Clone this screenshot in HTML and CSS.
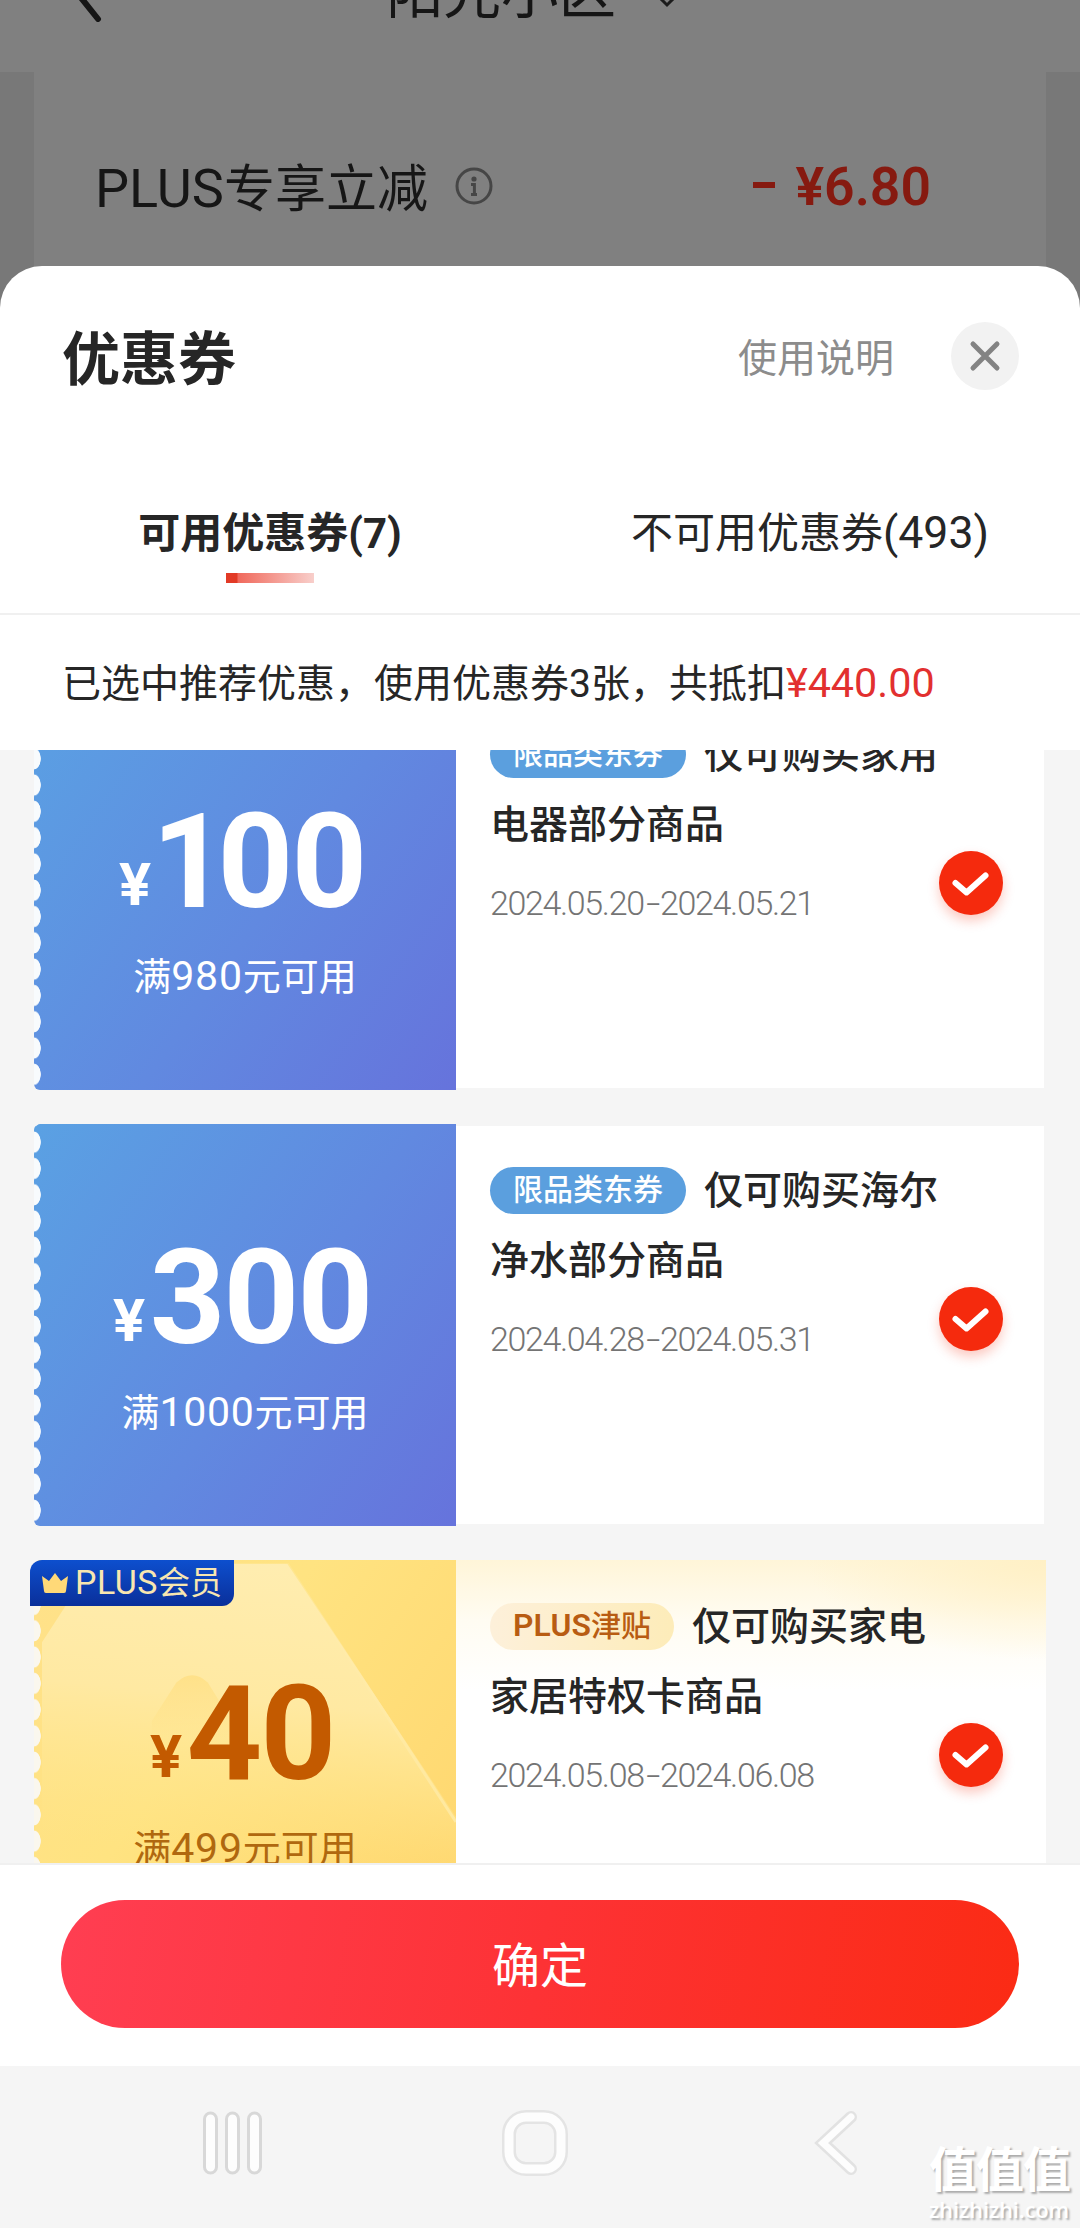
FILE: index.html
```html
<!DOCTYPE html>
<html lang="zh-CN">
<head>
<meta charset="utf-8">
<title>优惠券</title>
<link rel="stylesheet" href="styles.css">
</head>
<body>
<div class="screen">
  <header class="page-head">
    <svg class="page-back" width="30" height="54" viewBox="0 0 30 54"><path d="M27 3 5 26 25 51" fill="none" stroke="#161616" stroke-width="6" stroke-linecap="round"/></svg>
    <h1 class="page-title">阳光小区</h1>
    <svg class="page-caret" width="22" height="14" viewBox="0 0 22 14"><path d="M2 2 11 11 20 2" fill="none" stroke="#1c1c1c" stroke-width="3"/></svg>
  </header>
  <section class="page-body">
    <div class="discount">
      <span class="discount-name"><span class="num">PLUS</span>专享立减</span>
      <svg class="info" width="38" height="38" viewBox="0 0 38 38"><circle cx="19" cy="19" r="17" fill="none" stroke="#464646" stroke-width="3"/><circle cx="19" cy="12" r="2.600" fill="#464646"/><path d="M16 17.500h3.400V27M16 27.500h6" fill="none" stroke="#464646" stroke-width="3"/></svg>
      <span class="discount-minus"></span>
      <span class="discount-price">¥6.80</span>
    </div>
  </section>

  <main class="sheet">
    <div class="sheet-head">
      <h2 class="sheet-title">优惠券</h2>
      <a class="help">使用说明</a>
      <button class="close" aria-label="关闭"><svg width="32" height="32" viewBox="0 0 32 32"><path d="M4 4 28 28M28 4 4 28" stroke="#838383" stroke-width="5" stroke-linecap="round"/></svg></button>
    </div>
    <nav class="tabs">
      <a class="tab tab-active">可用优惠券(7)</a>
      <a class="tab">不可用优惠券<span class="num">(493)</span></a>
    </nav>
    <p class="notice">已选中推荐优惠，使用优惠券3张，共抵扣<span class="notice-sum num">¥440.00</span></p>

    <div class="list">
      <article class="coupon">
        <div class="stub">
          <div class="amount"><span class="yen">¥</span><span class="one">1</span>00</div>
          <div class="terms">满<span class="num">980</span>元可用</div>
        </div>
        <div class="info-pane">
          <div class="desc"><span class="tag">限品类东券</span>仅可购买家用<br>电器部分商品</div>
          <div class="dates">2024.05.20<span class="dash">-</span>2024.05.21</div>
          <span class="check"><svg width="40" height="28" viewBox="0 0 40 28"><path d="M4.500 14 15.500 23.500 34.500 6.500" fill="none" stroke="#fff" stroke-width="6" stroke-linecap="round" stroke-linejoin="round"/></svg></span>
        </div>
      </article>
      <article class="coupon">
        <div class="stub">
          <div class="amount"><span class="yen">¥</span>300</div>
          <div class="terms">满<span class="num">1000</span>元可用</div>
        </div>
        <div class="info-pane">
          <div class="desc"><span class="tag">限品类东券</span>仅可购买海尔<br>净水部分商品</div>
          <div class="dates">2024.04.28<span class="dash">-</span>2024.05.31</div>
          <span class="check"><svg width="40" height="28" viewBox="0 0 40 28"><path d="M4.500 14 15.500 23.500 34.500 6.500" fill="none" stroke="#fff" stroke-width="6" stroke-linecap="round" stroke-linejoin="round"/></svg></span>
        </div>
      </article>
      <article class="coupon coupon-plus">
        <div class="stub">
          <svg class="beam" width="422" height="402" viewBox="0 0 422 402">
            <defs>
              <linearGradient id="ray" x1="0.600" y1="0" x2="0.500" y2="1"><stop offset="0" stop-color="#ffedb0"/><stop offset="0.350" stop-color="#ffe9a2"/><stop offset="0.750" stop-color="#ffe68a" stop-opacity="0"/></linearGradient>
              <linearGradient id="edge" x1="0" y1="0" x2="0" y2="1"><stop offset="0" stop-color="#ffedb0" stop-opacity="0.300"/><stop offset="1" stop-color="#ffe9a0"/></linearGradient>
              <linearGradient id="peak" x1="0" y1="0" x2="0" y2="1"><stop offset="0" stop-color="#ffd96f"/><stop offset="0.600" stop-color="#ffd96f" stop-opacity="0"/></linearGradient>
            </defs>
            <path d="M22 46 0 80V402H422V258L250 0H50Z" fill="url(#ray)"/>
            <path d="M250 0 422 263" stroke="url(#edge)" stroke-width="3"/>
            <path d="M112 160 137 121Q153 106 169 121L230 220H110Z" fill="url(#peak)" opacity=".5"/>
          </svg>
          <div class="member"><svg width="28" height="21" viewBox="0 0 28 21"><path d="M1 3 8 8 14 0 20 8 27 3 25 18Q25 20 23 20H5Q3 20 3 18Z" fill="#ffd978"/></svg><span><span class="num">PLUS</span>会员</span></div>
          <div class="amount"><span class="yen">¥</span>40</div>
          <div class="terms">满<span class="num">499</span>元可用</div>
        </div>
        <div class="info-pane">
          <div class="desc"><span class="tag"><span class="num">PLUS</span>津贴</span>仅可购买家电<br>家居特权卡商品</div>
          <div class="dates">2024.05.08<span class="dash">-</span>2024.06.08</div>
          <span class="check"><svg width="40" height="28" viewBox="0 0 40 28"><path d="M4.500 14 15.500 23.500 34.500 6.500" fill="none" stroke="#fff" stroke-width="6" stroke-linecap="round" stroke-linejoin="round"/></svg></span>
        </div>
      </article>
    </div>

    <div class="actions"><button class="confirm">确定</button></div>
  </main>

  <footer class="sysbar">
    <svg width="62" height="68" viewBox="0 0 62 68" fill="#fdfdfd" stroke="#d8d8d8" stroke-width="3"><rect x="2.500" y="4" width="12" height="60" rx="6"/><rect x="24.500" y="4" width="12" height="60" rx="6"/><rect x="46.500" y="4" width="12" height="60" rx="6"/></svg>
    <svg width="68" height="70" viewBox="0 0 68 70" fill="none"><rect x="8" y="9" width="52" height="52" rx="17" stroke="#e4e4e4" stroke-width="14"/><rect x="8" y="9" width="52" height="52" rx="17" stroke="#fdfdfd" stroke-width="9"/></svg>
    <svg width="46" height="68" viewBox="0 0 46 68" fill="none" stroke-linecap="round"><path d="M37 8 9 34 37 60" stroke="#e2e2e2" stroke-width="12"/><path d="M37 8 9 34 37 60" stroke="#fdfdfd" stroke-width="7"/></svg>
    <div class="mark"><span class="mark-name">值值值</span><span class="mark-site">zhizhizhi.com</span></div>
  </footer>
</div>
</body>
</html>
```
FILE: styles.css
```css
* { box-sizing: border-box; }
body {
  margin: 0;
  background: #f5f5f5;
  color: #262626;
  font-family: Roboto, "Noto Sans CJK SC", sans-serif;
}
h1, h2, p { margin: 0; font-weight: 400; }
button { border: 0; padding: 0; font: inherit; }
svg { display: block; flex: none; }
.num { font-size: 1.06em; line-height: 1; }

.screen { width: 1080px; height: 2228px; overflow: hidden; display: flex; flex-direction: column; }

/* Dimmed page behind the sheet */
.page-head { height: 72px; flex: none; display: flex; background: #808080; color: #161616; overflow: hidden; }
.page-back { margin: -32px 0 0 73px; }
.page-title { margin: -38px 0 0 283px; font-size: 57.500px; line-height: 64px; white-space: nowrap; }
.page-caret { margin: -6px 0 0 40px; }
.page-body { height: 244px; flex: none; padding: 0 34px; background: #787878; }
.discount { height: 100%; display: flex; align-items: flex-start; padding: 84px 115px 0 61px; background: #808080; color: #161616; }
.discount-name { font-size: 51px; line-height: 64px; margin-top: 2px; white-space: nowrap; }
.info { margin: 11px 0 0 27px; }
.discount-minus { width: 22px; height: 6px; margin: 26px 21px 0 auto; background: #861a10; }
.discount-price { font-size: 53.500px; line-height: 61px; font-weight: 600; color: #861a10; }

/* Bottom sheet */
.sheet { height: 1800px; margin-top: -50px; flex: none; display: flex; flex-direction: column; background: #fff; border-radius: 42px 42px 0 0; overflow: hidden; }
.sheet-head { height: 180px; flex: none; display: flex; align-items: center; padding: 0 61px 0 62px; }
.sheet-title { flex: 1; font-size: 58px; font-weight: 700; line-height: 70px; padding-top: 8px; }
.help { font-size: 39px; color: #8c8c8c; line-height: 50px; margin-right: 57px; padding-top: 6px; }
.close { width: 68px; height: 68px; border-radius: 50%; background: #f2f2f2; display: grid; place-items: center; }
.tabs { height: 169px; flex: none; display: flex; border-bottom: 2px solid #f0f0f0; }
.tab { width: 540px; text-align: center; font-size: 42px; line-height: 50px; padding-top: 63px; }
.tab-active { font-weight: 700; }
.tab-active::after { content: ""; display: block; width: 88px; height: 10px; margin: 14px auto 0; background: linear-gradient(90deg, #e23a26 0 11px, #f0695c 12px, #f8cfcb); }
.notice { height: 135px; flex: none; padding: 44px 0 0 62px; font-size: 39px; line-height: 50px; white-space: nowrap; }
.notice-sum { color: #e2302f; }

/* Coupons */
.list { height: 1113px; flex: none; background: #f5f5f5; padding: 0 34px; overflow: hidden; }
.coupon { height: 402px; margin-bottom: 34px; display: flex; }
.coupon:first-child { margin-top: -62px; }
.stub {
  width: 422px; position: relative; border-radius: 6px 0 0 6px; padding-top: 99px; text-align: center; color: #fff;
  background:
    radial-gradient(ellipse 7px 11px at 0 50%, #f8fbfd 92%, transparent) 0 5px / 8px 26.300px repeat-y,
    linear-gradient(125deg, #5aa1e3, #6189e0 55%, #6673dc);
}
.amount { position: relative; left: -3px; font-size: 132px; font-weight: 700; line-height: 150px; height: 150px; letter-spacing: -1.800px; }
.yen { font-family: Inter, Roboto, sans-serif; font-size: 58px; margin-right: 4px; letter-spacing: 0; position: relative; top: -2px; }
.one { margin: 0 -8px 0 -4px; }
.terms { position: relative; font-size: 38px; line-height: 50px; margin-top: 15px; }
.terms .num { font-size: 1.080em; letter-spacing: .7px; }
.info-pane { position: relative; width: 588px; height: 398px; margin-top: 2px; padding: 29px 0 0 34px; background: #fff; }
.desc { font-size: 39px; line-height: 70px; font-weight: 500; white-space: nowrap; padding-top: 1px; }
.tag { display: inline-block; height: 47px; line-height: 45px; padding: 0 23px; margin-right: 18px; border-radius: 24px; background: #5b9fde; color: #fff; font-size: 30px; vertical-align: 4px; }
.dates { margin-top: 23px; font-size: 34px; line-height: 40px; font-weight: 300; color: #747474; letter-spacing: -1.350px; }
.dash { display: inline-block; transform: scaleX(1.5); margin: 0 4px; }
.check { position: absolute; right: 41px; top: 161px; width: 64px; height: 64px; border-radius: 50%; background: #f52a0d; box-shadow: 0 6px 12px rgba(245, 42, 13, .25); display: grid; place-items: center; }

.coupon-plus .stub {
  color: #c35a00;
  background:
    radial-gradient(ellipse 7px 11px at 0 50%, #faf7ee 92%, transparent) 0 5px / 8px 26.300px repeat-y,
    linear-gradient(125deg, #ffe18a, #ffe381 40%, #ffd56c);
}
.coupon-plus .terms { color: #b0680f; }
.coupon-plus .info-pane {
  width: 590px; height: 402px; margin-top: 0; padding-top: 31px;
  background: radial-gradient(ellipse 240px 100px at 100% 0, #fff0c5, rgba(255, 248, 225, 0)), linear-gradient(#fff5d8, #fffcf2 60px, #fff 130px);
}
.coupon-plus .check { right: 43px; top: 163px; }
.coupon-plus .tag { background: linear-gradient(90deg, #fdf0da, #fdecb9); color: #b85c12; }
.coupon-plus .tag .num { font-weight: 600; letter-spacing: .2px; }
.beam { position: absolute; left: 8px; top: 0; width: 414px; }
.member { position: absolute; left: -4px; top: 0; width: 204px; height: 46px; display: flex; align-items: center; gap: 6px; padding-left: 11px; border-radius: 12px 0 12px 0; background: linear-gradient(#0d4fce, #0a2f9a); color: #f8e6b0; font-size: 32px; line-height: 46px; white-space: nowrap; }
.member .num { letter-spacing: .5px; }

/* Actions and system bar */
.actions { height: 203px; flex: none; border-top: 2px solid #f0f0f0; padding: 35px 61px 0; background: #fff; }
.confirm { width: 958px; height: 128px; padding-top: 5px; border-radius: 64px; background: linear-gradient(100deg, #ff3e52, #fd3235 50%, #fb2b14); color: #fff; font-size: 48px; line-height: 123px; }
.sysbar { position: relative; height: 162px; flex: none; display: flex; align-items: flex-start; padding: 43px 0 0 202px; background: #f5f5f5; }
.sysbar svg:nth-child(2) { margin: -1px 0 0 237px; }
.sysbar svg:nth-child(3) { margin-left: 245px; }
.mark { position: absolute; right: 9px; bottom: 6px; width: 142px; display: flex; flex-direction: column; color: #fff; white-space: nowrap; text-shadow: 2px 2px 2px rgba(0, 0, 0, .3); }
.mark-name { font-size: 48px; line-height: 54px; font-weight: 700; letter-spacing: -1px; }
.mark-site { font-family: "Open Sans", sans-serif; font-size: 21.500px; line-height: 24px; font-weight: 600; }
```
